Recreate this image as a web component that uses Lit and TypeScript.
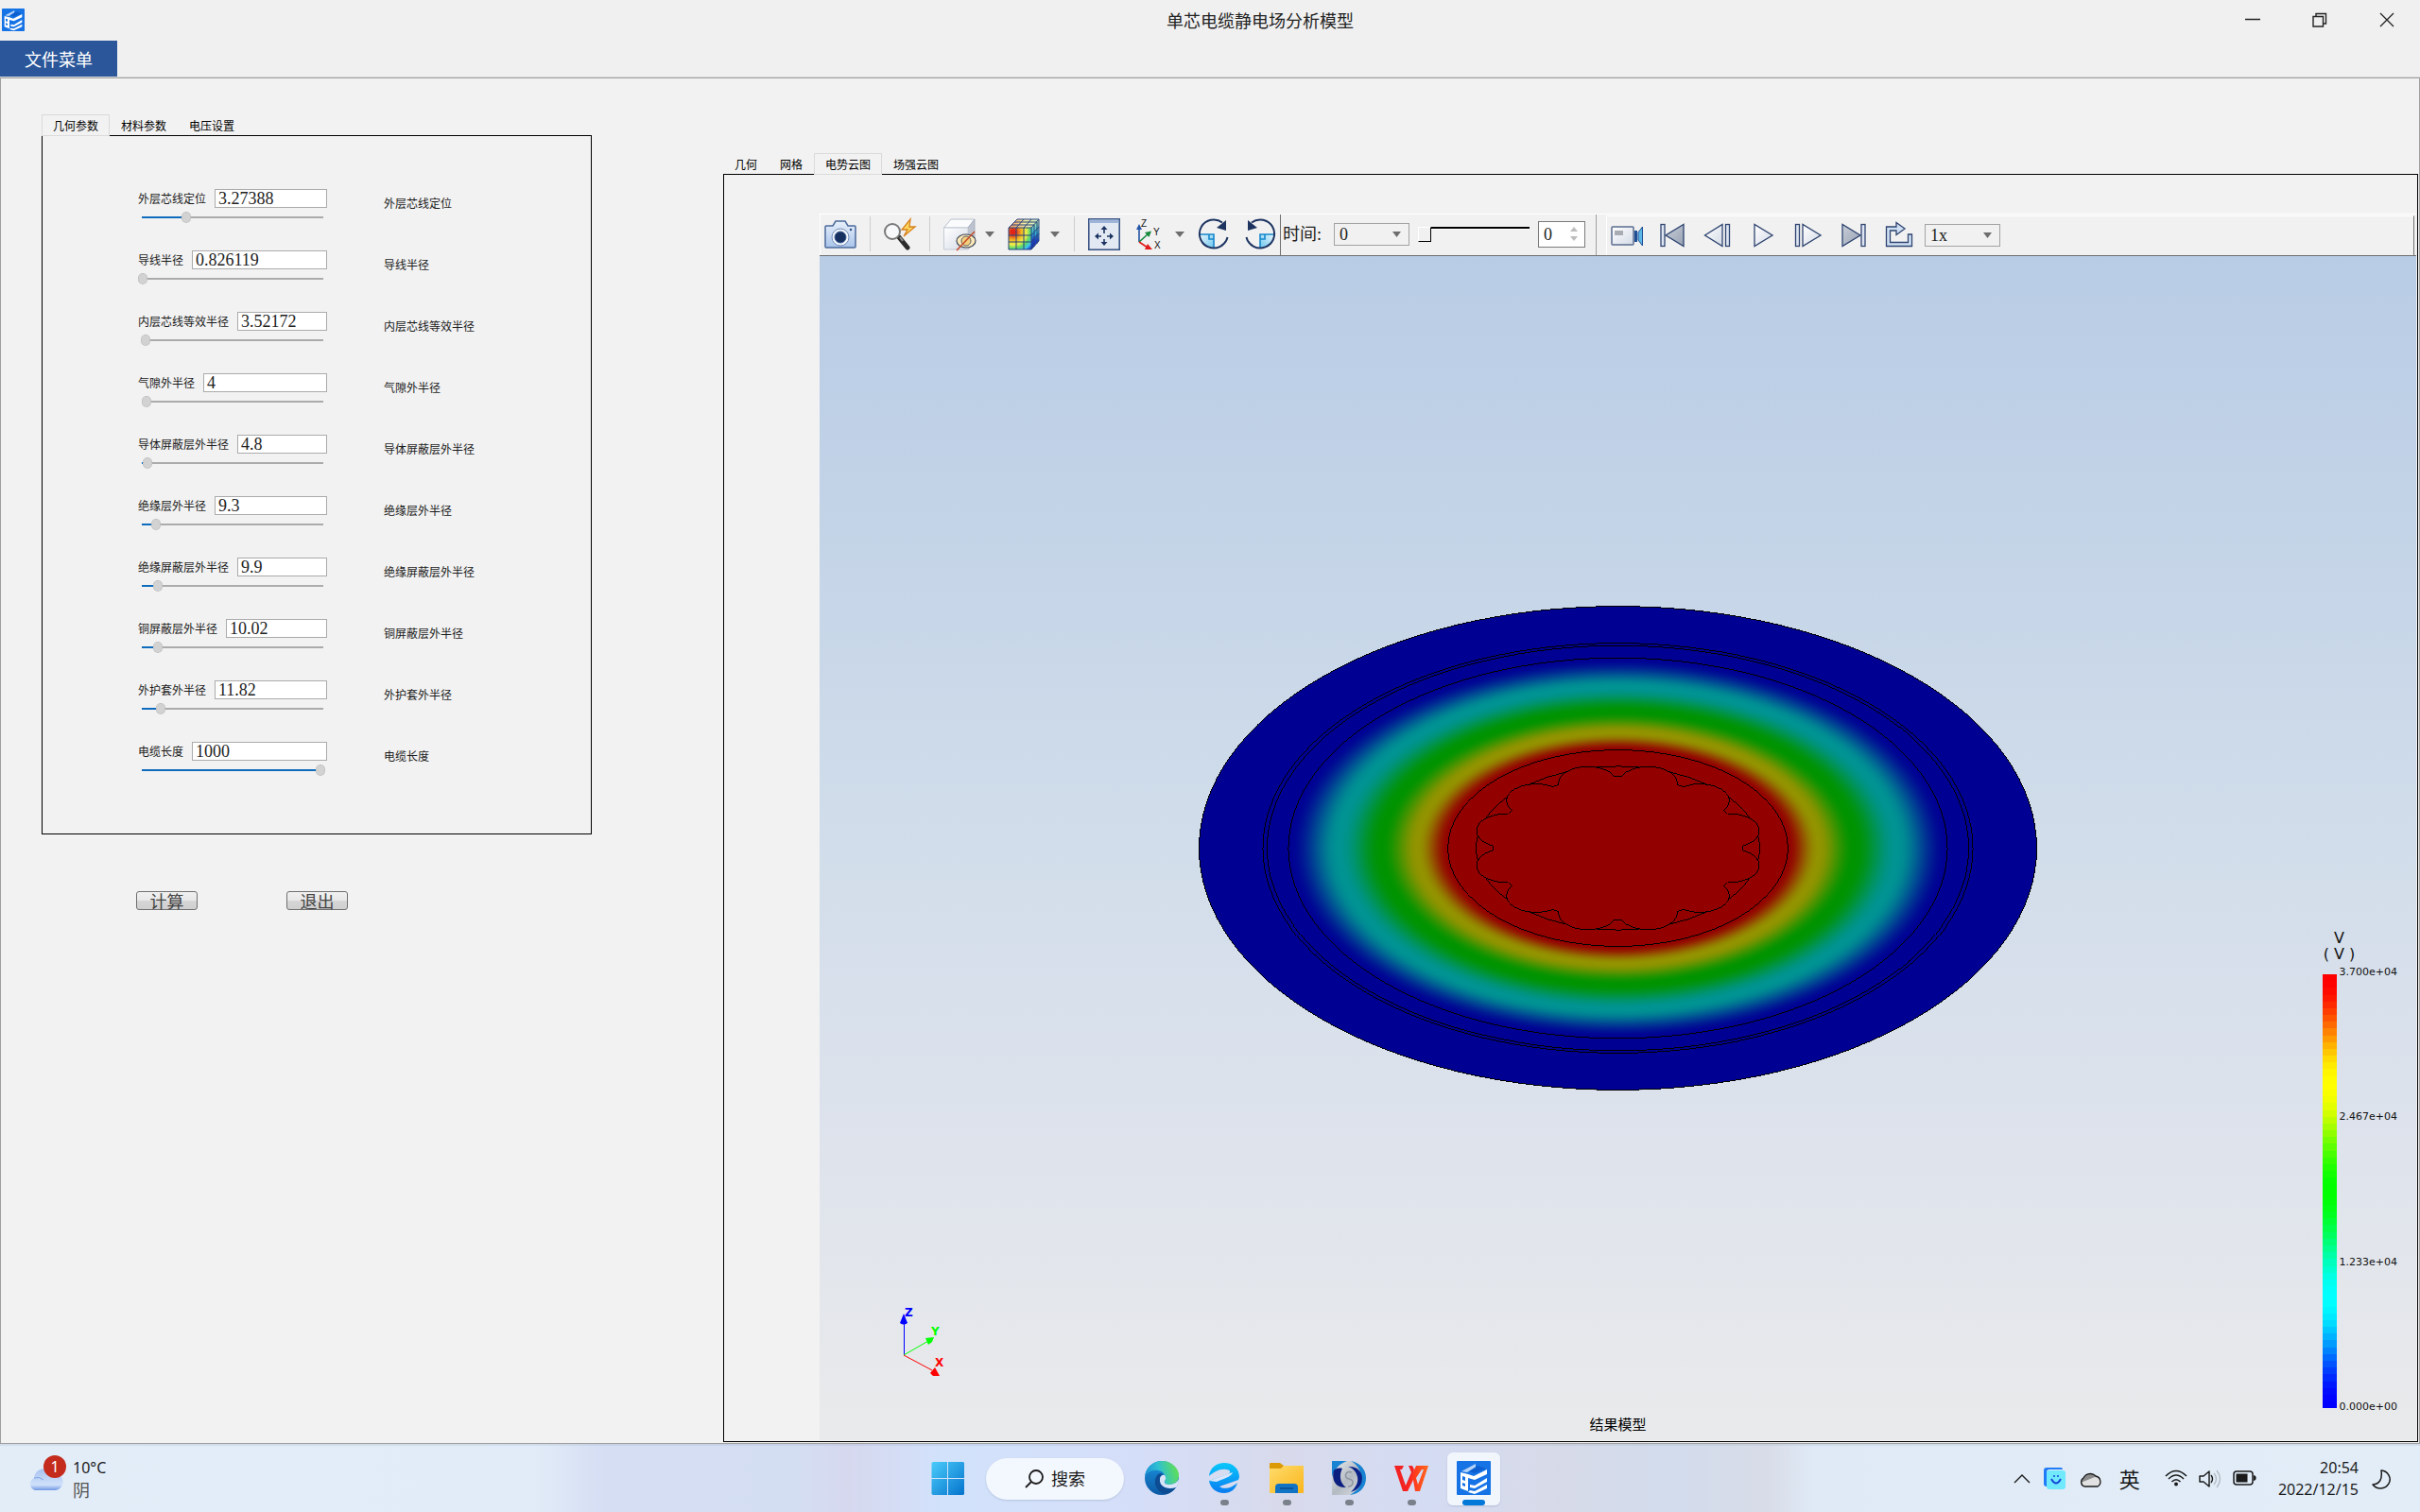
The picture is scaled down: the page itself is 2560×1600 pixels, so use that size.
import { LitElement, html, css, svg } from "lit";
import { customElement, property, state } from "lit/decorators.js";
import { classMap } from "lit/directives/class-map.js";
import { styleMap } from "lit/directives/style-map.js";

const CJK = css`"Noto Sans CJK SC", sans-serif`;
const SERIF = css`"Liberation Serif", "Noto Sans CJK SC", serif`;

/* ---------- colour map shared by the field plot and the legend ---------- */

const ANCHORS: number[][] = [
  [0, 0, 255],
  [0, 255, 255],
  [0, 255, 0],
  [255, 255, 0],
  [255, 0, 0],
];

function fieldColor(v: number, light = 1): string {
  const t = Math.min(Math.max(v, 0), 1) * 4;
  const i = Math.min(Math.floor(t), 3);
  const f = t - i;
  const s = f * f * (3 - 2 * f);
  const c = ANCHORS[i].map((a, k) => Math.round((a + (ANCHORS[i + 1][k] - a) * s) * light));
  return `rgb(${c.join(",")})`;
}

/* ---------- application logo ---------- */

const logo = svg`
  <rect width="36" height="36" rx="1" fill="#1673e6"></rect>
  <path d="M5 11 L20 3 V7 L11 12 Z" fill="#b5d3f8"></path>
  <path d="M13 11 L22 5 L31 8 L19 13 Z" fill="#0b5fd0"></path>
  <path fill-rule="evenodd" fill="#fff" d="M4 12 L12 14 V32 L4 29 Z M6 16 V20 L9 21 V17 Z M6 23 V26 L9 27 V24 Z"></path>
  <path fill="#fff" d="M12 14 L18 16 L32 9 V14 L19 20 L12 18 Z M14 25 L19 26 L32 18 V22 L19 29 L14 28 Z M14 31 L19 32 L32 25 V29 L19 35 L12 33 Z"></path>`;

/* ---------- parameter row ---------- */

interface Param {
  label: string;
  value: string;
  pos: number;
}

const PARAMS: Param[] = [
  { label: "外层芯线定位", value: "3.27388", pos: 46 },
  { label: "导线半径", value: "0.826119", pos: 0 },
  { label: "内层芯线等效半径", value: "3.52172", pos: 3 },
  { label: "气隙外半径", value: "4", pos: 4 },
  { label: "导体屏蔽层外半径", value: "4.8", pos: 5 },
  { label: "绝缘层外半径", value: "9.3", pos: 14 },
  { label: "绝缘屏蔽层外半径", value: "9.9", pos: 16 },
  { label: "铜屏蔽层外半径", value: "10.02", pos: 16 },
  { label: "外护套外半径", value: "11.82", pos: 19 },
  { label: "电缆长度", value: "1000", pos: 188 },
];

@customElement("param-row")
class ParamRow extends LitElement {
  @property() label = "";
  @property() value = "";
  @property({ type: Number }) pos = 0;

  static styles = css`
    :host {
      display: grid;
      grid-template-columns: 200px auto;
      column-gap: 60px;
      font: 12px/20px ${CJK};
      color: #1a1a1a;
    }
    .field {
      display: flex;
      gap: 9px;
    }
    .field label {
      flex: none;
    }
    .value {
      flex: 1;
      min-width: 0;
      height: 20px;
      box-sizing: border-box;
      border: 1px solid #ababab;
      border-radius: 0;
      background: #fff;
      padding: 1px 3px 0;
      font: 18px/18px ${SERIF};
      color: #222;
      outline: none;
    }
    .slider {
      appearance: none;
      display: block;
      width: 100%;
      height: 12px;
      margin: 4px 0 0;
      background: none;
    }
    .slider::-webkit-slider-runnable-track {
      height: 12px;
      background:
        linear-gradient(#0f6cbd, #0f6cbd) 4px 5px / var(--fill) 2px no-repeat,
        linear-gradient(#ababab, #ababab) 4px 5px / calc(100% - 8px) 2px no-repeat;
    }
    .slider::-webkit-slider-thumb {
      appearance: none;
      width: 10px;
      height: 12px;
      box-sizing: border-box;
      border: 1px dotted #b4b4b4;
      border-radius: 5px;
      background: #d2d2d2;
    }
    .caption {
      line-height: 30px;
      white-space: nowrap;
    }
  `;

  render() {
    return html`
      <div>
        <div class="field">
          <label for="value">${this.label}</label>
          <input class="value" id="value" type="text" .value=${this.value} />
        </div>
        <input
          class="slider"
          type="range"
          min="0"
          max="190"
          aria-label=${this.label}
          .value=${String(this.pos)}
          style=${styleMap({ "--fill": `${this.pos}px` })}
          @input=${(e: Event) => (this.pos = Number((e.target as HTMLInputElement).value))}
        />
      </div>
      <span class="caption">${this.label}</span>
    `;
  }
}

/* ---------- tab strip with framed panel ---------- */

@customElement("tab-frame")
class TabFrame extends LitElement {
  @property({ attribute: false }) tabs: string[] = [];
  @property({ type: Number }) active = 0;

  static styles = css`
    :host {
      display: flex;
      flex-direction: column;
    }
    .tabs {
      display: flex;
      margin-bottom: -1px;
      z-index: 1;
    }
    .tab {
      height: 23px;
      padding: 0 11px;
      border: 1px solid transparent;
      background: none;
      font: 12px/20px ${CJK};
      color: #000;
    }
    .tab.on {
      border-color: #dadada;
      background: #f2f2f2;
    }
    .panel {
      flex: 1;
      display: flex;
      flex-direction: column;
      border: 1px solid #000;
    }
  `;

  render() {
    return html`
      <div class="tabs" role="tablist">
        ${this.tabs.map(
          (t, i) => html`<button
            class=${classMap({ tab: true, on: i === this.active })}
            role="tab"
            aria-selected=${i === this.active ? "true" : "false"}
            @click=${() => (this.active = i)}
          >${t}</button>`
        )}
      </div>
      <div class="panel" role="tabpanel"><slot></slot></div>
    `;
  }
}

/* ---------- viewer toolbar ---------- */

const cubeGrid = svg`
  <path d="M0 10 H24 V33 H0 Z M0 18 H24 M0 25 H24 M8 10 V33 M16 10 V33
           M0 10 L9 1 H32 L24 10 M32 1 V24 L24 33 M27 7 V30 M30 4 V27 M24 18 L32 9 M24 25 L32 16
           M8 10 L16 1 M16 10 L24 1 M3 7 H27 M6 4 H30"
        fill="none" stroke="#26437c" stroke-width="1"></path>`;

const rotateGlyph = svg`
  <path d="M2 17 H16 V31 C8 31 2 25 2 17 Z" fill="url(#quad)"></path>
  <path d="M2 17 H16 V31" fill="none" stroke="#1488cc" stroke-width="1.6"></path>
  <path d="M11 17 V22 H16" fill="none" stroke="#1488cc" stroke-width="1.6"></path>
  <path d="M25 4.500 A15 15 0 1 0 30.500 20" fill="none" stroke="#1d3461" stroke-width="2"></path>
  <path d="M29 2 V13 L19 10 Z" fill="#1d3461"></path>`;

const ICONS = {
  camera: svg`
    <path d="M2 8 H9 L12 3 H22 L25 8 H32 Q33 8 33 9 V30 Q33 31 32 31 H2 Q1 31 1 30 V9 Q1 8 2 8 Z" fill="url(#soft)" stroke="#4b6a9b" stroke-width="1.500"></path>
    <circle cx="17" cy="20" r="9" fill="#f4f8fd" stroke="#6d89b5"></circle>
    <circle cx="17" cy="20" r="6" fill="#16305f" stroke="#3f5f95"></circle>
    <circle cx="28" cy="12" r="1.200" fill="#2e4a7d"></circle>`,
  find: svg`
    <path d="M16 20 L25 31" stroke="#2b2b2b" stroke-width="5" stroke-linecap="round"></path>
    <path d="M17 20 L20 24" stroke="#8d8d8d" stroke-width="2"></path>
    <circle cx="9" cy="14" r="8" fill="#f7f9fb" stroke="#7a7a7a" stroke-width="2"></circle>
    <path d="M28 1 L19 12 H25 L21 19 L33 9 H27 Z" fill="#fbd65c" stroke="#d8801e" stroke-width="1.300"></path>`,
  hide: svg`
    <path d="M0.500 10 L8 1 H33 L26 10 Z" fill="#fbfcfd" stroke="#b9c0cc"></path>
    <path d="M26 10 L33 1 V24 L26 33 Z" fill="#bcc3cf" stroke="#aab2c0"></path>
    <path d="M0.500 10 H26 V33 H0.500 Z" fill="url(#pale)" stroke="#c3cad6"></path>
    <ellipse cx="24" cy="24" rx="10" ry="7" fill="#fce9b8" stroke="#3d4657" stroke-width="1.200"></ellipse>
    <ellipse cx="24" cy="24" rx="5" ry="5" fill="#f4cf7c" stroke="#5b6272"></ellipse>
    <path d="M14 34 L33 14" stroke="#c8502e" stroke-width="1.600"></path>`,
  cube: svg`
    <path d="M0 10 L9 1 H32 L24 10 Z" fill="url(#cubeTop)"></path>
    <path d="M24 10 L32 1 V24 L24 33 Z" fill="url(#cubeSide)"></path>
    <path d="M0 10 H24 V33 H0 Z" fill="url(#cubeFront)"></path>
    ${cubeGrid}`,
  fit: svg`
    <rect x="0.800" y="0.800" width="32.400" height="32.400" fill="#e3e9f3" stroke="#3c5687" stroke-width="1.600"></rect>
    <rect x="1.600" y="1.600" width="30.800" height="3.400" fill="#9db4d8"></rect>
    <path d="M17 16 V9 M17 22 V28 M14 19 H8 M20 19 H26" stroke="#1d3461" stroke-width="1.600"></path>
    <path d="M13.500 12 L17 8 L20.500 12 Z M13.500 25 L17 29 L20.500 25 Z M11 15.500 L7 19 L11 22.500 Z M23 15.500 L27 19 L23 22.500 Z" fill="#1d3461"></path>`,
  axes: svg`
    <path d="M6 25 V8" stroke="#2454a6" stroke-width="1.600"></path>
    <path d="M3 12 L6 6 L9 12 Z" fill="#2454a6"></path>
    <path d="M6 25 L15 17" stroke="#178a3c" stroke-width="1.600"></path>
    <path d="M12 15 L19 13.500 L16.500 20 Z" fill="#178a3c"></path>
    <path d="M6 25 L15 31" stroke="#e11b1b" stroke-width="1.600"></path>
    <path d="M15 27 L20 33 L12 33 Z" fill="#e11b1b"></path>
    <g font-family="Liberation Sans, sans-serif" font-size="10" fill="#111">
      <text x="8" y="9">Z</text><text x="21" y="18">Y</text><text x="22" y="32">X</text>
    </g>`,
  rotateRight: rotateGlyph,
  rotateLeft: svg`<g transform="translate(33 0) scale(-1 1)">${rotateGlyph}</g>`,
  record: svg`
    <rect x="1" y="8" width="23" height="19" rx="1" fill="url(#pale)" stroke="#5a6c90" stroke-width="1.500"></rect>
    <rect x="4" y="12" width="9" height="5" fill="#a9acb2"></rect>
    <path d="M25 12 H28 V24 H25 Z" fill="#1f4f95"></path>
    <path d="M29 14 L33.500 8 V28 L29 22 Z" fill="#5db7e4" stroke="#1f4f95"></path>`,
  first: svg`
    <rect x="5" y="5.500" width="4" height="23" fill="#dfe6f2" stroke="#2e4470" stroke-width="1.300"></rect>
    <path d="M29 5.500 V28.500 L10 17 Z" fill="url(#steel)" stroke="#2e4470" stroke-width="1.300"></path>`,
  prev: svg`
    <path d="M22 5.500 V28.500 L3.500 17 Z" fill="url(#pale)" stroke="#2e4470" stroke-width="1.300"></path>
    <rect x="25.500" y="5.500" width="4" height="23" fill="#dfe6f2" stroke="#2e4470" stroke-width="1.300"></rect>`,
  play: svg`<path d="M8 5.500 V28.500 L27 17 Z" fill="url(#pale)" stroke="#2e4470" stroke-width="1.300"></path>`,
  next: svg`
    <rect x="3.500" y="5.500" width="4" height="23" fill="#dfe6f2" stroke="#2e4470" stroke-width="1.300"></rect>
    <path d="M11 5.500 V28.500 L30 17 Z" fill="url(#pale)" stroke="#2e4470" stroke-width="1.300"></path>`,
  last: svg`
    <path d="M5 5.500 V28.500 L24 17 Z" fill="url(#steel)" stroke="#2e4470" stroke-width="1.300"></path>
    <rect x="25" y="5.500" width="4" height="23" fill="#dfe6f2" stroke="#2e4470" stroke-width="1.300"></rect>`,
  loop: svg`
    <path d="M3.500 28.500 V8 H14 V3.500 L23 10 L14 16.500 V12 H7.500 V24.500 H26.500 V16 H30.500 V28.500 Z" fill="#cfe0f4" stroke="#2e4470" stroke-width="1.300"></path>`,
};

const iconDefs = svg`
  <defs>
    <linearGradient id="soft" x1="0" y1="0" x2="0" y2="1"><stop offset="0" stop-color="#e8f0fb"></stop><stop offset="1" stop-color="#a9c4ea"></stop></linearGradient>
    <linearGradient id="pale" x1="0" y1="0" x2="1" y2="1"><stop offset="0" stop-color="#ffffff"></stop><stop offset="1" stop-color="#d3dae6"></stop></linearGradient>
    <linearGradient id="steel" x1="0" y1="0" x2="1" y2="1"><stop offset="0" stop-color="#c9ced8"></stop><stop offset="1" stop-color="#98a2b4"></stop></linearGradient>
    <linearGradient id="quad" x1="0" y1="0" x2="1" y2="1"><stop offset="0" stop-color="#e4f5fd"></stop><stop offset="1" stop-color="#6fc6ee"></stop></linearGradient>
    <radialGradient id="cubeFront" cx="0.200" cy="0.200" r="1.050"><stop offset="0.100" stop-color="#e2231a"></stop><stop offset="0.350" stop-color="#f3b41f"></stop><stop offset="0.550" stop-color="#eef04a"></stop><stop offset="0.720" stop-color="#59d66a"></stop><stop offset="0.880" stop-color="#3fc4ee"></stop><stop offset="1" stop-color="#1f46d8"></stop></radialGradient>
    <linearGradient id="cubeTop"><stop offset="0" stop-color="#f08a5c"></stop><stop offset="0.500" stop-color="#f5e8a0"></stop><stop offset="1" stop-color="#c9efc0"></stop></linearGradient>
    <linearGradient id="cubeSide" x1="0" y1="0" x2="0" y2="1"><stop offset="0" stop-color="#c9efa0"></stop><stop offset="0.450" stop-color="#35b6d8"></stop><stop offset="0.700" stop-color="#1b3fd0"></stop><stop offset="1" stop-color="#162ca0"></stop></linearGradient>
  </defs>`;

@customElement("viewer-toolbar")
class ViewerToolbar extends LitElement {
  static styles = css`
    :host {
      display: flex;
      height: 43px;
      border-top: 1px solid #fff;
      border-bottom: 1px solid #707070;
      background: #f1f1f1;
      font: 18px/20px ${SERIF};
      color: #222;
    }
    .group {
      display: flex;
      align-items: center;
      padding: 0 0 2px;
    }
    .tools {
      gap: 14px;
      padding-left: 4px;
      padding-right: 4px;
      border-left: 1px solid #fff;
      border-right: 1px solid #707070;
    }
    .time {
      gap: 9px;
      padding-left: 2px;
      padding-right: 11px;
      border-right: 1px solid #a0a0a0;
    }
    .play {
      flex: 1;
      gap: 14px;
      margin: 1px 2px 0 10px;
      padding-left: 4px;
      border-top: 1px solid #fff;
      border-left: 1px solid #fff;
      border-right: 1px solid #707070;
    }
    .icon {
      width: 34px;
      height: 34px;
      padding: 0;
      border: 0;
      background: none;
    }
    .icon svg {
      display: block;
      overflow: visible;
    }
    .arrow svg {
      display: block;
    }
    .rule {
      width: 1px;
      height: 37px;
      background: #cdcdcd;
    }
    .pair {
      display: flex;
      align-items: center;
      gap: 10px;
      padding-right: 1px;
    }
    .arrow {
      padding: 0;
      border: 0;
      background: none;
    }
    .label {
      padding-right: 4px;
    }
    .combo {
      display: grid;
      align-items: center;
      width: 80px;
    }
    .combo select,
    .combo svg {
      grid-area: 1 / 1;
    }
    .combo select {
      appearance: none;
      height: 24px;
      padding: 0 5px;
      border: 1px solid #a3a3a3;
      border-radius: 0;
      background: #f1f1f1;
      font: inherit;
      color: #222;
    }
    .combo svg {
      justify-self: end;
      margin-right: 9px;
      pointer-events: none;
    }
    .seek {
      appearance: none;
      width: 118px;
      height: 16px;
      margin: 0;
      background: none;
    }
    .seek::-webkit-slider-runnable-track {
      height: 16px;
      background: linear-gradient(#000 2px, #fff 2px, #fff 3px, transparent 3px);
    }
    .seek::-webkit-slider-thumb {
      appearance: none;
      width: 14px;
      height: 16px;
      box-sizing: border-box;
      border: 1px solid;
      border-color: #fff #000 #000 #fff;
      background: #f1f1f1;
    }
    .spin {
      display: flex;
      align-items: center;
      width: 50px;
      height: 28px;
      box-sizing: border-box;
      border: 1px solid #7a7a7a;
      background: #fff;
    }
    .spin input {
      appearance: textfield;
      flex: 1;
      min-width: 0;
      padding: 0 5px;
      border: 0;
      background: none;
      font: inherit;
      color: #222;
    }
    .spin input::-webkit-inner-spin-button {
      display: none;
    }
    .spin svg {
      margin-right: 7px;
    }
  `;

  private icon(name: keyof typeof ICONS, title: string) {
    return html`<button class="icon" aria-label=${title}>
      <svg width="34" height="34" viewBox="0 0 34 34">${iconDefs}${ICONS[name]}</svg>
    </button>`;
  }

  private arrow(title: string) {
    return html`<button class="arrow" aria-label=${title}>
      <svg width="10" height="6" viewBox="0 0 10 6"><path d="M0 0 H10 L5 6 Z" fill="#6e6e6e"></path></svg>
    </button>`;
  }

  private combo(title: string, text: string) {
    return html`<div class="combo">
      <select aria-label=${title}><option>${text}</option></select>
      <svg width="9" height="6" viewBox="0 0 9 6"><path d="M0 0 H9 L4.500 6 Z" fill="#6e6e6e"></path></svg>
    </div>`;
  }

  render() {
    return html`
      <div class="group tools">
        ${this.icon("camera", "截图")}
        <span class="rule"></span>
        ${this.icon("find", "快速缩放")}
        <span class="rule"></span>
        <div class="pair">${this.icon("hide", "隐藏")}${this.arrow("隐藏选项")}</div>
        <div class="pair">${this.icon("cube", "显示模式")}${this.arrow("显示选项")}</div>
        <span class="rule"></span>
        ${this.icon("fit", "适应窗口")}
        <div class="pair">${this.icon("axes", "视图方向")}${this.arrow("视图选项")}</div>
        ${this.icon("rotateRight", "顺时针旋转")}
        ${this.icon("rotateLeft", "逆时针旋转")}
      </div>
      <div class="group time">
        <span class="label">时间:</span>
        ${this.combo("时间", "0")}
        <input class="seek" type="range" min="0" max="10" value="0" aria-label="时间步" />
        <div class="spin">
          <input type="number" value="0" aria-label="步数" />
          <svg width="8" height="15" viewBox="0 0 8 15"><path d="M0 5 L4 0 L8 5 Z M0 10 H8 L4 15 Z" fill="#bdbdbd"></path></svg>
        </div>
      </div>
      <div class="group play">
        ${this.icon("record", "录制")}
        ${this.icon("first", "首帧")}
        ${this.icon("prev", "上一帧")}
        ${this.icon("play", "播放")}
        ${this.icon("next", "下一帧")}
        ${this.icon("last", "末帧")}
        <div class="pair">${this.icon("loop", "循环")}${this.combo("速度", "1x")}</div>
      </div>
    `;
  }
}

/* ---------- field plot ---------- */

const SX = 37.5;
const SY = 21.66;
const RINGS = [11.82, 10.02, 9.9, 9.3, 4.8];

/* Outline of the twelve strands around the core, closed by the air-gap circle between them. */
function strandOutline(): string {
  const wire = 0.826119;
  const d = 3.27388;
  const outer = 4;
  const inner = 3.52172;
  const meet = (r: number) => Math.acos((d * d + r * r - wire * wire) / (2 * d * r));
  const step = Math.PI / 6;
  const at = (r: number, a: number) => `${(r * Math.cos(a) * SX).toFixed(2)} ${(r * Math.sin(a) * SY).toFixed(2)}`;
  const arc = (r: number) => `A${(r * SX).toFixed(2)} ${(r * SY).toFixed(2)} 0 0 1`;
  let path = "";
  for (let k = 0; k < 12; k++) {
    const mid = (k + 0.5) * step;
    const a = meet(inner);
    const b = meet(outer);
    path += `M${at(inner, mid - a)} ${arc(wire)} ${at(inner, mid + a)} L${at(inner, mid + step - a)} `;
    path += `M${at(outer, mid + b)} ${arc(outer)} ${at(outer, mid + step - b)} `;
  }
  return path;
}

@customElement("field-view")
class FieldView extends LitElement {
  static styles = css`
    :host {
      display: block;
      position: relative;
      flex: 1;
      background: linear-gradient(#b8cce5, #d1ddea 50%, #dee3ec 75%, #e9eaeb);
      font-family: "DejaVu Sans", sans-serif;
      color: #111;
    }
    .plot {
      position: absolute;
      inset: 0;
      width: 100%;
      height: 100%;
    }
    .line {
      fill: none;
      stroke: #000;
      shape-rendering: crispEdges;
    }
    .triad {
      position: absolute;
      left: 79px;
      bottom: 64px;
    }
    .triad text {
      font: bold 12px "DejaVu Sans", sans-serif;
    }
    .caption {
      position: absolute;
      left: 0;
      right: 0;
      bottom: 7px;
      text-align: center;
      font: 15px/20px ${CJK};
      color: #000;
    }
    .legend {
      position: absolute;
      right: 20px;
      bottom: 29px;
      height: 40.8%;
      display: flex;
      flex-direction: column;
      gap: 5px;
    }
    .unit {
      align-self: flex-start;
      text-align: center;
      font-size: 16px;
      line-height: 17px;
    }
    .unit div {
      width: 36px;
      white-space: nowrap;
    }
    .scale {
      flex: 1;
      min-height: 0;
      display: flex;
      gap: 3px;
    }
    .bar {
      display: flex;
      flex-direction: column;
      width: 15px;
      padding: 8px 0 5px;
    }
    .bar svg {
      flex: 1;
      min-height: 0;
      width: 15px;
    }
    .ticks {
      display: flex;
      flex-direction: column;
      justify-content: space-between;
      font-size: 11px;
      line-height: 12px;
    }
  `;

  render() {
    const steps = 48;
    const stops = Array.from({ length: steps + 1 }, (_, i) => {
      const r = 4.8 + (4.5 * i) / steps;
      return svg`<stop offset=${r / 11.82} stop-color=${fieldColor(Math.log(9.3 / r) / Math.log(9.3 / 4.8), 147 / 255)}></stop>`;
    });
    const bands = 64;
    return html`
      <svg class="plot" viewBox="-845 -626 1690 1252">
        <defs>
          <radialGradient id="field">${stops}</radialGradient>
        </defs>
        <ellipse rx=${11.82 * SX} ry=${11.82 * SY} fill="url(#field)"></ellipse>
        ${RINGS.map((r) => svg`<ellipse class="line" rx=${r * SX} ry=${r * SY}></ellipse>`)}
        <path class="line" d=${strandOutline()}></path>
      </svg>
      <svg class="triad" width="60" height="80" viewBox="0 0 60 80">
        <path d="M10 54 V16" stroke="#00f" shape-rendering="crispEdges"></path>
        <path d="M10 10 L14 20 Q10 23 6 20 Z" fill="#00f"></path>
        <path d="M10 54 L36 39" stroke="#0f0"></path>
        <path d="M33 36 L42 35 L40 40 L36 43 Z" fill="#0f0"></path>
        <path d="M10 54 L40 70" stroke="#f00"></path>
        <path d="M38 73 L43 67 L48 76 L41 76 Z" fill="#f00"></path>
        <text x="11" y="13" fill="#00f">Z</text>
        <text x="39" y="33" fill="#0f0">Y</text>
        <text x="43" y="66" fill="#f00">X</text>
      </svg>
      <div class="caption">结果模型</div>
      <div class="legend">
        <div class="unit">
          <div>V</div>
          <div>( V )</div>
        </div>
        <div class="scale">
          <div class="bar">
            <svg viewBox="0 0 1 ${bands}" preserveAspectRatio="none" shape-rendering="crispEdges">
              ${Array.from(
                { length: bands },
                (_, i) => svg`<rect y=${i} width="1" height="1" fill=${fieldColor(1 - i / (bands - 1))}></rect>`
              )}
            </svg>
          </div>
          <div class="ticks">
            <span>3.700e+04</span>
            <span>2.467e+04</span>
            <span>1.233e+04</span>
            <span>0.000e+00</span>
          </div>
        </div>
      </div>
    `;
  }
}

/* ---------- desktop taskbar ---------- */

const APPS = [
  {
    name: "Edge",
    state: "",
    art: svg`
      <defs>
        <linearGradient id="eTop" x1="0" y1="0.600" x2="1" y2="0.400"><stop offset="0" stop-color="#1b8fd8"></stop><stop offset="0.450" stop-color="#2fc0d2"></stop><stop offset="1" stop-color="#62e04f"></stop></linearGradient>
        <linearGradient id="eLow" x1="0" y1="0" x2="0" y2="1"><stop offset="0" stop-color="#1a93df"></stop><stop offset="1" stop-color="#0c59a4"></stop></linearGradient>
      </defs>
      <circle cx="18" cy="18" r="18" fill="url(#eLow)"></circle>
      <path d="M0 17 C1 7 9 0 18 0 C29 0 36 8 36 15 C36 21 32 25 26 25 C22 25 20 23 21 21 C23 19 22 11 14 10 C8 9 2 12 0 17 Z" fill="url(#eTop)"></path>
      <path d="M14 14 C8 20 11 33 22 35 C27 34 31 31 33 28 C25 32 15 27 16 19 C16 16 18 14 20 15 C18 13 16 13 14 14 Z" fill="#0d4b92"></path>
      <path d="M16 19 C16 16 19 14 21 15 C23 18 22 20 21 21 C20 24 23 25 26 25 C32 25 35 21 36 19 C36 24 34 27 33 28 C24 31 15 27 16 19 Z" fill="#d9e4f8"></path>`,
  },
  {
    name: "浏览器",
    state: "run",
    art: svg`
      <defs><linearGradient id="bz" x1="0" y1="0" x2="0" y2="1"><stop offset="0" stop-color="#08c8fb"></stop><stop offset="1" stop-color="#0a7cf0"></stop></linearGradient></defs>
      <path d="M2 16 C3 7 10 2 18 2 C27 2 34 8 34 17 L33 20 L13 27 C18 31 27 28 32 23 C30 30 25 34 18 34 C9 34 3 28 2 21 L22 14 C26 12 24 9 20 9 C13 8 7 12 2 16 Z" fill="url(#bz)"></path>
      <path d="M2 21 L27 12 C26 16 22 17 10 22 Z" fill="#dbe6fb"></path>`,
  },
  {
    name: "文件资源管理器",
    state: "run",
    art: svg`
      <defs><linearGradient id="fd" x1="0" y1="0" x2="1" y2="1"><stop offset="0" stop-color="#ffdc6b"></stop><stop offset="1" stop-color="#f9b51c"></stop></linearGradient></defs>
      <path d="M0 3 Q0 2 1 2 H11 L15 5 V10 H0 Z" fill="#dc9a08"></path>
      <path d="M0 8 H12 L15 5 H35 Q36 5 36 6 V33 Q36 34 35 34 H1 Q0 34 0 33 Z" fill="url(#fd)"></path>
      <path d="M6 34 V28 Q6 24 10 24 H26 Q30 24 30 28 V34 Z" fill="#1173c4"></path>
      <path d="M11 29 H25" stroke="#0a4a8a" stroke-width="1.500"></path>`,
  },
  {
    name: "仿真平台",
    state: "run",
    art: svg`
      <defs><linearGradient id="sv" x1="0" y1="0" x2="1" y2="1"><stop offset="0" stop-color="#e9ecef"></stop><stop offset="0.500" stop-color="#b4bac2"></stop><stop offset="1" stop-color="#dfe3e8"></stop></linearGradient></defs>
      <path d="M0 0 H18 A18 18 0 0 1 18 36 H0 Z" fill="url(#sv)"></path>
      <path d="M0 0 H16 C8 3 3 8 0 17 Z" fill="#1783d2"></path>
      <path d="M2 10 C-1 20 4 29 15 28 C9 24 7 16 11 8 C7 7 4 8 2 10 Z" fill="#0b1f80"></path>
      <path d="M20 0 C30 2 36 9 36 18 C36 28 29 35 19 36 C28 31 32 25 31 17 C30 9 27 4 20 0 Z" fill="#1783d2"></path>
      <path d="M17 6 C26 5 32 11 32 18 C32 26 27 31 20 33 C26 27 28 22 27 17 C26 12 23 8 17 6 Z" fill="#0a2288"></path>
      <path d="M21 12 C14 10 12 18 18 19 C24 20 23 27 17 27" fill="none" stroke="#8d959f" stroke-width="1.500"></path>`,
  },
  {
    name: "WPS",
    state: "run",
    art: svg`
      <defs><linearGradient id="wp" x1="0" y1="0" x2="1" y2="0"><stop offset="0" stop-color="#ff1c1c"></stop><stop offset="1" stop-color="#ff6a1e"></stop></linearGradient></defs>
      <path d="M0 5 H10 L8 9 H6 L12 26 L18 12 L15 5 H19 L21 9 L14 32 H9 Z" fill="#f32323"></path>
      <path d="M36 5 H27 L23 5 L19 14 L12 32 H14 L20 20 L22 32 H27 L36 5 Z M29 9 H31 L25 25 L23 18 Z" fill-rule="evenodd" fill="url(#wp)"></path>`,
  },
  { name: "单芯电缆静电场分析模型", state: "current", art: logo },
];

@customElement("task-bar")
class TaskBar extends LitElement {
  static styles = css`
    :host {
      display: grid;
      grid-template-columns: 1fr auto 1fr;
      align-items: center;
      height: 72px;
      box-sizing: border-box;
      padding-top: 2px;
      background: linear-gradient(
        90deg,
        #e2edf8,
        #e2ecf8 22%,
        #d5def3 25%,
        #d4def2 33%,
        #d6d8ee 35%,
        #d2e2fb 39%,
        #d5def8 47%,
        #d8daeb 53%,
        #d4dcf3 59%,
        #d7dae8 64%,
        #d2dcec 69%,
        #d8dce8 73%,
        #dfeaf6 75%,
        #e2edf8
      );
      box-shadow: inset 0 2px 0 rgba(120, 140, 170, 0.15);
      font: 16px/24px "Noto Sans", ${CJK};
      color: #1b1b1b;
    }
    button {
      padding: 0;
      border: 0;
      background: none;
      font: inherit;
      color: inherit;
    }
    svg {
      display: block;
      flex: none;
    }
    .weather {
      display: flex;
      align-items: center;
      justify-self: start;
      gap: 7px;
      padding-left: 30px;
      text-align: left;
    }
    .sky {
      color: #555;
      font-size: 18px;
    }
    .sky,
    .temp {
      display: block;
      line-height: 24px;
    }
    .apps {
      display: flex;
      align-items: center;
      gap: 10px;
      padding-left: 2px;
    }
    .app {
      display: grid;
      grid-template-rows: 36px 6px;
      row-gap: 5px;
      justify-content: center;
      justify-items: center;
      width: 56px;
      height: 56px;
      padding-top: 9px;
      box-sizing: border-box;
      border-radius: 6px;
    }
    .app.current {
      background: rgba(246, 249, 254, 0.85);
      box-shadow: 0 1px 2px rgba(90, 110, 150, 0.25);
    }
    .mark {
      width: 9px;
      height: 6px;
      border-radius: 3px;
    }
    .run .mark {
      background: #7b818b;
    }
    .current .mark {
      width: 24px;
      background: #0078d7;
    }
    .search {
      display: flex;
      align-items: center;
      justify-content: center;
      gap: 8px;
      width: 146px;
      height: 44px;
      margin: 0 2px;
      border-radius: 22px;
      background: #f3f7fe;
      box-shadow: 0 1px 2px rgba(90, 110, 150, 0.25);
      font-size: 18px;
    }
    .tray {
      display: flex;
      align-items: center;
      justify-self: end;
      padding-right: 30px;
      gap: 14px;
    }
    .status {
      display: flex;
      gap: 12px;
      padding: 0 9px 0 12px;
    }
    .ime {
      padding-left: 4px;
      font-size: 22px;
    }
    .clock {
      text-align: right;
      line-height: 23px;
    }
    .clock span {
      display: block;
    }
  `;

  render() {
    return html`
      <button class="weather">
        <svg width="40" height="50" viewBox="0 0 40 50">
          <defs><linearGradient id="cl" x1="0" y1="0" x2="0" y2="1"><stop offset="0" stop-color="#a9c3f0"></stop><stop offset="0.750" stop-color="#cfe0fa"></stop><stop offset="1" stop-color="#6f97e2"></stop></linearGradient></defs>
          <path d="M7 37 A7 7 0 0 1 6 24 A11 11 0 0 1 26 19 A9 9 0 0 1 29 37 Z" fill="url(#cl)"></path>
          <path d="M6 24 Q12 22 16 26" fill="none" stroke="#7fa2e4"></path>
          <circle cx="28" cy="12" r="12" fill="#c42b1c"></circle>
          <text x="28" y="18" text-anchor="middle" font-size="16" fill="#fff">1</text>
        </svg>
        <span><span class="temp">10°C</span><span class="sky">阴</span></span>
      </button>
      <div class="apps">
        <button class="app" aria-label="开始">
          <svg width="36" height="36" viewBox="0 0 36 36">
            <defs><linearGradient id="wn" gradientUnits="userSpaceOnUse" x1="0" y1="0" x2="36" y2="36"><stop offset="0" stop-color="#4bcdfb"></stop><stop offset="1" stop-color="#0472cc"></stop></linearGradient></defs>
            <path d="M2 1 H17 V18 H0.500 V2 Z M18 1 H34 L35 2 V18 H18 Z M0.500 19 H17 V36 H2 L0.500 35 Z M18 19 H35 V35 L34 36 H18 Z" fill="url(#wn)"></path>
          </svg>
        </button>
        <button class="search">
          <svg width="20" height="20" viewBox="0 0 20 20"><circle cx="12" cy="8" r="7" fill="none" stroke="#1b1b1b" stroke-width="1.800"></circle><path d="M7 13 L1 19" stroke="#1b1b1b" stroke-width="1.800"></path></svg>
          搜索
        </button>
        ${APPS.map(
          (a) => html`<button class="app ${a.state}" aria-label=${a.name}>
            <svg width="36" height="36" viewBox="0 0 36 36">${a.art}</svg>
            <span class="mark"></span>
          </button>`
        )}
      </div>
      <div class="tray">
        <svg width="18" height="12" viewBox="0 0 18 12"><path d="M1 10 L9 2 L17 10" fill="none" stroke="#1b1b1b" stroke-width="1.400"></path></svg>
        <svg width="24" height="24" viewBox="0 0 24 24">
          <rect x="3" y="3" width="20" height="20" rx="3" fill="#6fe9fb"></rect>
          <path d="M3 0 H18 Q20 0 20 2 H6 Q3 2 3 5 V20 Q0 20 0 17 V3 Q0 0 3 0 Z" fill="#1f7bf6"></path>
          <path d="M8 12 Q13 21 18 12" fill="none" stroke="#1544d8" stroke-width="2"></path>
          <path d="M10 9 H12 M14 9 H16" stroke="#1544d8" stroke-width="1.500"></path>
        </svg>
        <svg width="24" height="17" viewBox="0 0 24 17">
          <path d="M5 16 A5 5 0 0 1 4 7 A8 8 0 0 1 17 5 A6 6 0 0 1 19 16 Z" fill="#8b8b8b"></path>
          <path d="M5 16 A5 5 0 0 1 1 12 L16 6 Q23 7 23 12 Q22 16 19 16 Z" fill="#e2e2e2"></path>
          <path d="M5 16 A5 5 0 0 1 4 7 A8 8 0 0 1 17 5 A6 6 0 0 1 19 16 Z" fill="none" stroke="#1b1b1b" stroke-width="1.300"></path>
        </svg>
        <span class="ime">英</span>
        <div class="status">
          <svg width="24" height="18" viewBox="0 0 24 18">
            <path d="M1 7 Q12 -4 23 7 M4 10 Q12 2 20 10 M7.500 13 Q12 8.500 16.500 13" fill="none" stroke="#1b1b1b" stroke-width="1.600"></path>
            <circle cx="12" cy="15.500" r="2" fill="#1b1b1b"></circle>
          </svg>
          <svg width="24" height="20" viewBox="0 0 24 20">
            <path d="M1 7 H5 L11 2 V18 L5 13 H1 Z" fill="none" stroke="#1b1b1b" stroke-width="1.500" stroke-linejoin="round"></path>
            <path d="M13 6 Q16 10 13 14" fill="none" stroke="#1b1b1b" stroke-width="1.400"></path>
            <path d="M16 4 Q21 10 16 16 M19 1 Q26 10 19 19" fill="none" stroke="#b3bcc7" stroke-width="1.400"></path>
          </svg>
          <svg width="25" height="18" viewBox="0 0 25 18">
            <rect x="1" y="2" width="20" height="14" rx="3" fill="none" stroke="#1b1b1b" stroke-width="1.500"></rect>
            <rect x="3.500" y="4.500" width="12" height="9" fill="#1b1b1b"></rect>
            <path d="M22 6 Q25 7 24.500 9 Q25 11 22 12 Z" fill="#1b1b1b"></path>
          </svg>
        </div>
        <div class="clock"><span>20:54</span><span>2022/12/15</span></div>
        <svg width="21" height="21" viewBox="0 0 21 21"><path d="M10 1 A10 9.500 0 1 1 1 16 Q12 15 10 1 Z" fill="none" stroke="#1b1b1b" stroke-width="1.500" stroke-linejoin="round"></path></svg>
      </div>
    `;
  }
}

/* ---------- application window ---------- */

@customElement("app-root")
class AppRoot extends LitElement {
  @state() private inputTabs = ["几何参数", "材料参数", "电压设置"];
  @state() private viewTabs = ["几何", "网格", "电势云图", "场强云图"];

  static styles = css`
    :host {
      display: flex;
      flex-direction: column;
      min-height: 100vh;
      background: #f0f0f0;
      font-family: ${CJK};
    }
    .title {
      display: grid;
      grid-template-columns: 319px 1fr 213px;
      align-items: center;
      height: 43px;
      box-sizing: border-box;
      padding-bottom: 2px;
    }
    .logo {
      display: block;
      margin-left: 2px;
    }
    .title h1 {
      margin: 0;
      text-align: center;
      font: 18px/24px ${CJK};
      color: #222;
    }
    .controls {
      display: grid;
      grid-template-columns: repeat(3, 1fr);
      align-self: stretch;
    }
    .controls button {
      display: grid;
      place-items: center;
      padding: 0;
      border: 0;
      background: none;
    }
    .menu {
      display: flex;
      height: 38px;
    }
    .menu button {
      width: 124px;
      padding: 0;
      border: 0;
      background: #2b579a;
      font: 18px/24px ${CJK};
      color: #fff;
    }
    .work {
      flex: 1;
      display: grid;
      grid-template-columns: minmax(420px, 582fr) minmax(0, 1793fr);
      column-gap: 139px;
      padding: 0 1px 1px 43px;
      border: 1px solid #a0a0a0;
      box-shadow: 0 -1px 0 #d8d8d8;
      margin-top: 1px;
      background: #f2f2f2;
    }
    .inputs {
      padding-top: 38px;
    }
    .rows {
      display: flex;
      flex-direction: column;
      gap: 29px;
      padding: 56px 0 61px 101px;
    }
    .actions {
      display: flex;
      gap: 94px;
      padding: 60px 0 0 100px;
    }
    .actions button {
      width: 65px;
      height: 20px;
      padding: 0;
      border: 1px solid #707070;
      border-radius: 3px;
      background: linear-gradient(#f0f0f0, #e8e8e8 50%, #d6d6d6 50%, #cfcfcf);
      font: 18px/18px ${CJK};
      color: #444;
    }
    .result {
      display: flex;
      flex-direction: column;
      padding-top: 79px;
    }
    .result tab-frame {
      flex: 1;
    }
    .viewer {
      flex: 1;
      display: flex;
      flex-direction: column;
      padding: 41px 1px 1px 101px;
    }
  `;

  render() {
    return html`
      <header class="title">
        <svg class="logo" width="24" height="24" viewBox="0 0 36 36">${logo}</svg>
        <h1>单芯电缆静电场分析模型</h1>
        <div class="controls">
          <button aria-label="最小化">
            <svg width="16" height="16" viewBox="0 0 16 16"><path d="M0 7.500 H16" stroke="#222" stroke-width="1.500"></path></svg>
          </button>
          <button aria-label="还原">
            <svg width="16" height="16" viewBox="0 0 16 16"><path d="M1 4.500 H11.500 V15 H1 Z M4 4 V1.500 H14.500 V12 H12" fill="none" stroke="#222" stroke-width="1.400"></path></svg>
          </button>
          <button aria-label="关闭">
            <svg width="16" height="16" viewBox="0 0 16 16"><path d="M1 1 L15 15 M15 1 L1 15" stroke="#222" stroke-width="1.300"></path></svg>
          </button>
        </div>
      </header>
      <nav class="menu"><button>文件菜单</button></nav>
      <main class="work">
        <section class="inputs">
          <tab-frame .tabs=${this.inputTabs} .active=${0}>
            <div class="rows">
              ${PARAMS.map((p) => html`<param-row .label=${p.label} .value=${p.value} .pos=${p.pos}></param-row>`)}
            </div>
          </tab-frame>
          <div class="actions">
            <button>计算</button>
            <button>退出</button>
          </div>
        </section>
        <section class="result">
          <tab-frame .tabs=${this.viewTabs} .active=${2}>
            <div class="viewer">
              <viewer-toolbar></viewer-toolbar>
              <field-view></field-view>
            </div>
          </tab-frame>
        </section>
      </main>
      <task-bar></task-bar>
    `;
  }
}
